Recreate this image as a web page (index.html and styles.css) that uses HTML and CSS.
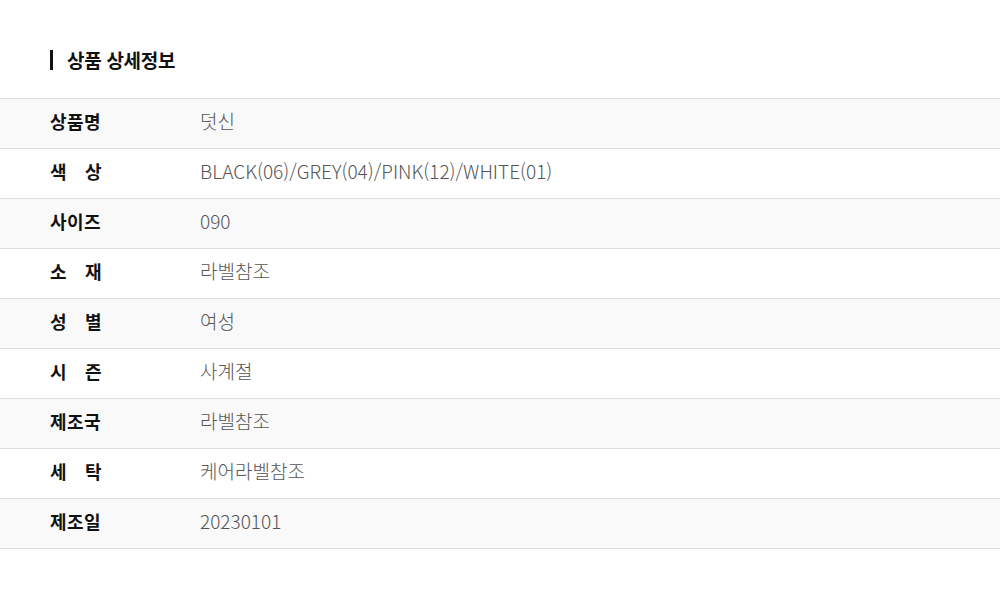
FILE: index.html
```html
<!doctype html>
<html lang="ko">
<head>
    <meta charset="UTF-8">
    <meta name="viewport" content="width=device-width, initial-scale=1.0">
    <title>상품 상세정보</title>
    <link rel="stylesheet" href="styles.css">
</head>
<body>
    <div class="detail">
        <h2 class="detail-title">상품 상세정보</h2>
        <table class="detail-table">
            <tbody>
                <tr><th><span class="label">상품명</span></th><td>덧신</td></tr>
                <tr><th><span class="label">색 상</span></th><td>BLACK(06)/GREY(04)/PINK(12)/WHITE(01)</td></tr>
                <tr><th><span class="label">사이즈</span></th><td>090</td></tr>
                <tr><th><span class="label">소 재</span></th><td>라벨참조</td></tr>
                <tr><th><span class="label">성 별</span></th><td>여성</td></tr>
                <tr><th><span class="label">시 즌</span></th><td>사계절</td></tr>
                <tr><th><span class="label">제조국</span></th><td>라벨참조</td></tr>
                <tr><th><span class="label">세 탁</span></th><td>케어라벨참조</td></tr>
                <tr><th><span class="label">제조일</span></th><td>20230101</td></tr>
            </tbody>
        </table>
    </div>
</body>
</html>
```

FILE: styles.css
```css
body {
    margin: 0;
    background-color: #fff;
    color: #111;
    font-family: "Noto Sans CJK KR", "Noto Sans", sans-serif;
}

.detail {
    padding-top: 50px;
}

.detail-title {
    margin: 0 0 28px 50px;
    padding-left: 14px;
    border-left: 3px solid #111;
    font-size: 19px;
    font-weight: 700;
    line-height: 20px;
    height: 20px;
    letter-spacing: -0.3px;
}

.detail-table {
    width: 100%;
    border-collapse: collapse;
    border-top: 1px solid #ddd;
}

.detail-table tr:nth-child(odd) {
    background-color: #f9f9f9;
}

.detail-table th,
.detail-table td {
    height: 50px;
    box-sizing: border-box;
    padding: 0 0 5px;
    border-bottom: 1px solid #ddd;
    line-height: 24px;
    text-align: left;
    vertical-align: middle;
    white-space: nowrap;
}

.detail-table th {
    width: 200px;
    padding-left: 50px;
    font-size: 18px;
    font-weight: 700;
    color: #111;
}

.label {
    display: inline-block;
    width: 52px;
    text-align: justify;
    text-align-last: justify;
    letter-spacing: 0.5px;
}

.detail-table td {
    font-size: 19px;
    color: #555;
    font-weight: 300;
}
```
